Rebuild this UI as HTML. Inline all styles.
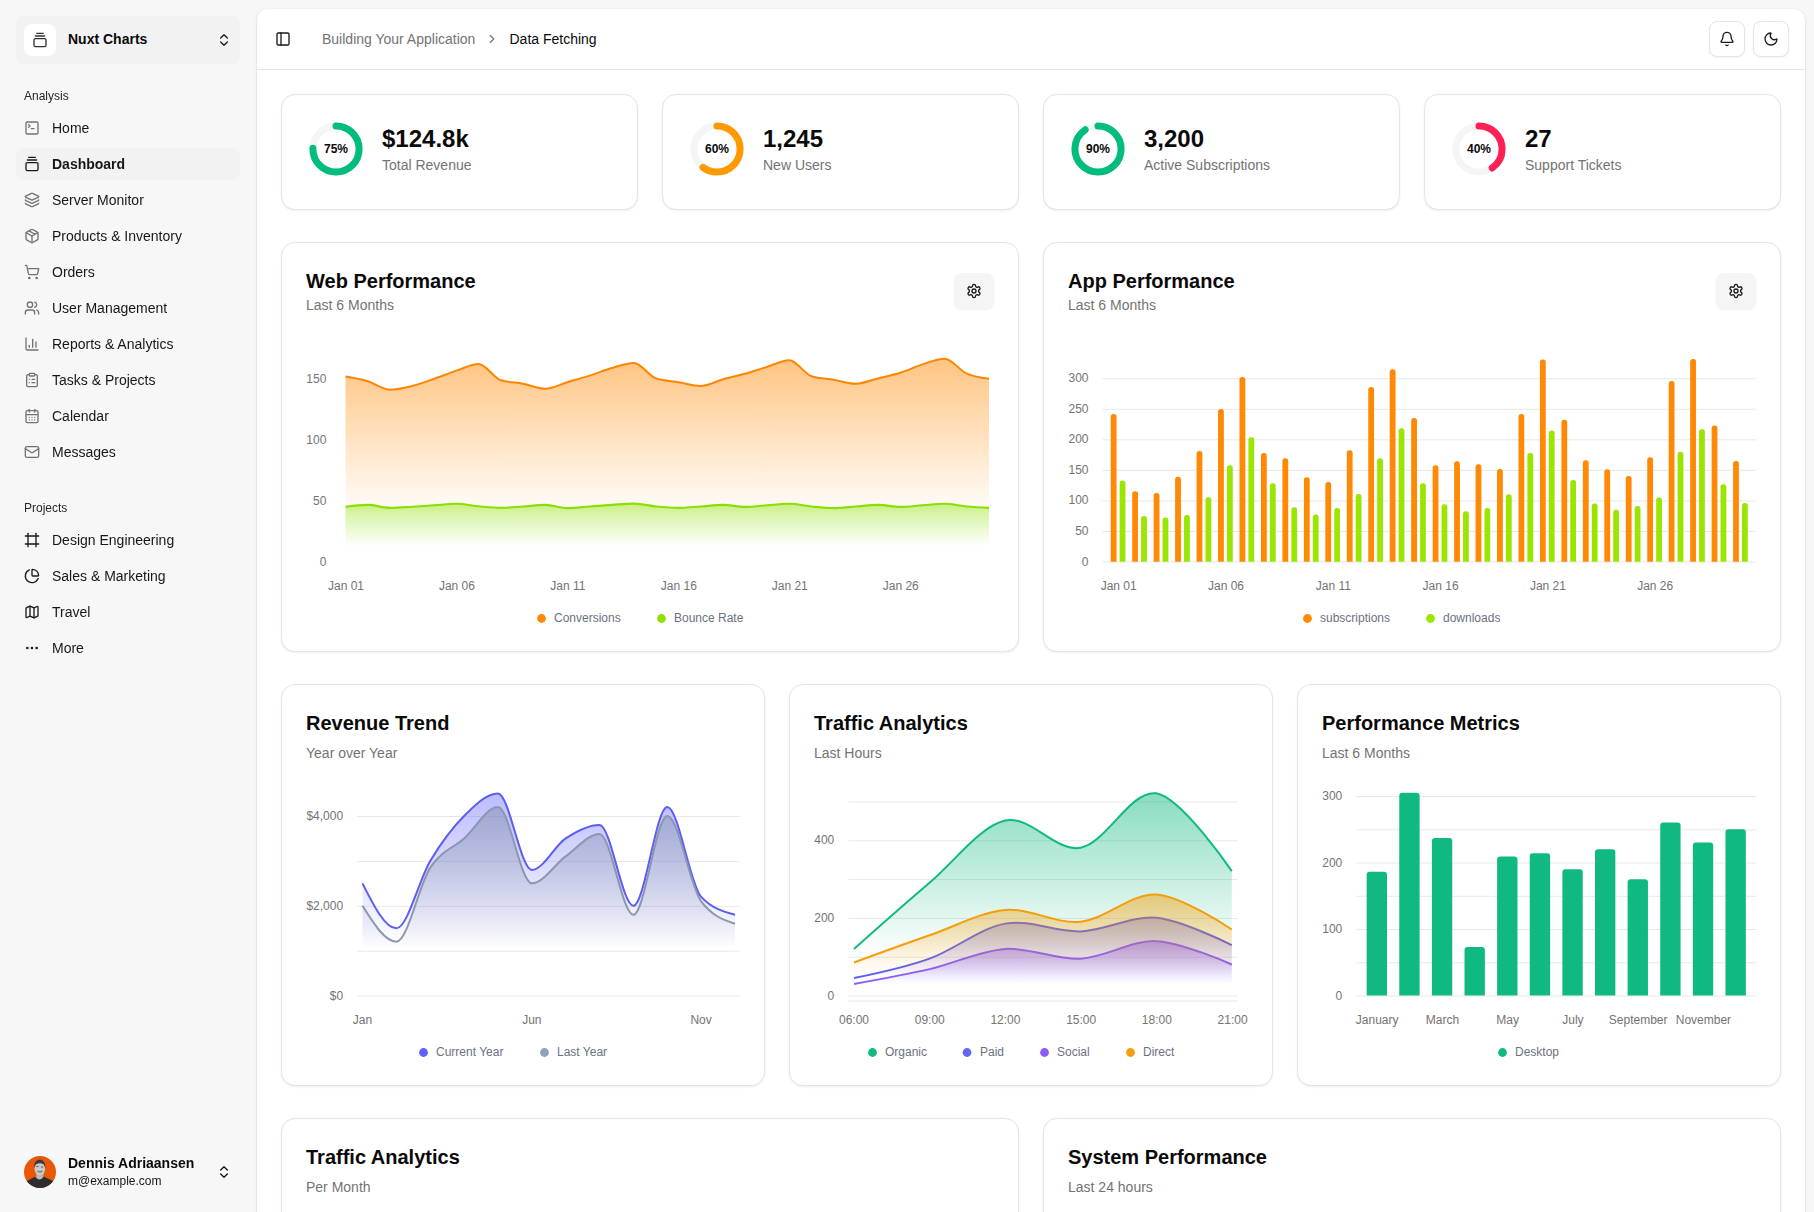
<!DOCTYPE html><html lang="en"><head><meta charset="utf-8"><title>Nuxt Charts Dashboard</title><style>
*{box-sizing:border-box}
html,body{margin:0;padding:0}
body{width:1814px;height:1212px;overflow:hidden;background:#f7f7f7;font-family:"Liberation Sans",Arial,sans-serif;color:#0a0a0a;position:relative}
.ic{position:absolute;display:block}
.t{position:absolute;white-space:nowrap;line-height:20px;font-size:14px}
.b{font-weight:700}
.card{position:absolute;background:#fff;border:1px solid #e5e5e5;border-radius:14px;box-shadow:0 1px 3px rgba(0,0,0,.06),0 1px 2px -1px rgba(0,0,0,.06)}
.box{position:absolute}
svg text{font-family:"Liberation Sans",Arial,sans-serif}
.ax{font-size:12px;fill:#737373}
.lg{font-size:12px;fill:#6a7282}
</style></head><body>
<div class="box" style="left:16px;top:16px;width:224px;height:48px;border-radius:8px;background:#f2f2f2"></div>
<div class="box" style="left:24px;top:24px;width:32px;height:32px;border-radius:8px;background:#fff"></div>
<svg class="ic" style="left:32px;top:32px" width="16" height="16" viewBox="0 0 24 24" fill="none" stroke="#333" stroke-width="2" stroke-linecap="round" stroke-linejoin="round"><path d="M7 2h10"/><path d="M5 6h14"/><rect width="18" height="12" x="3" y="10" rx="2"/></svg>
<div class="t b" style="left:68px;top:29px;font-size:14px;line-height:20px;color:#0a0a0a;">Nuxt Charts</div>
<svg class="ic" style="left:216px;top:31.5px" width="16" height="16" viewBox="0 0 24 24" fill="none" stroke="#1a1a1a" stroke-width="2" stroke-linecap="round" stroke-linejoin="round"><path d="m7 15 5 5 5-5"/><path d="m7 9 5-5 5 5"/></svg>
<div class="box" style="left:257px;top:9px;width:1548px;height:1300px;background:#fff;border-radius:11px;box-shadow:0 0 0 .5px rgba(0,0,0,.04),0 1px 3px rgba(0,0,0,.1),0 1px 2px -1px rgba(0,0,0,.1)"></div>
<div class="box" style="left:257px;top:69px;width:1548px;height:1px;background:#e5e5e5"></div>
<svg class="ic" style="left:275px;top:31px" width="16" height="16" viewBox="0 0 24 24" fill="none" stroke="#1a1a1a" stroke-width="2" stroke-linecap="round" stroke-linejoin="round"><rect width="18" height="18" x="3" y="3" rx="2"/><path d="M9 3v18"/></svg>
<div class="t" style="left:322px;top:29px;font-size:14px;line-height:20px;color:#737373;">Building Your Application</div>
<svg class="ic" style="left:485px;top:32px" width="14" height="14" viewBox="0 0 24 24" fill="none" stroke="#737373" stroke-width="2" stroke-linecap="round" stroke-linejoin="round"><path d="m9 18 6-6-6-6"/></svg>
<div class="t" style="left:509.5px;top:29px;font-size:14px;line-height:20px;color:#0a0a0a;">Data Fetching</div>
<div class="box" style="left:1709px;top:21px;width:36px;height:36px;border:1px solid #e5e5e5;border-radius:8px;background:#fff;box-shadow:0 1px 2px rgba(0,0,0,.05)"></div>
<svg class="ic" style="left:1719px;top:31px" width="16" height="16" viewBox="0 0 24 24" fill="none" stroke="#1a1a1a" stroke-width="2" stroke-linecap="round" stroke-linejoin="round"><path d="M10.268 21a2 2 0 0 0 3.464 0"/><path d="M3.262 15.326A1 1 0 0 0 4 17h16a1 1 0 0 0 .74-1.673C19.41 13.956 18 12.499 18 8A6 6 0 0 0 6 8c0 4.499-1.411 5.956-2.738 7.326"/></svg>
<div class="box" style="left:1753px;top:21px;width:36px;height:36px;border:1px solid #e5e5e5;border-radius:8px;background:#fff;box-shadow:0 1px 2px rgba(0,0,0,.05)"></div>
<svg class="ic" style="left:1763px;top:31px" width="16" height="16" viewBox="0 0 24 24" fill="none" stroke="#1a1a1a" stroke-width="2" stroke-linecap="round" stroke-linejoin="round"><path d="M20.985 12.486a9 9 0 1 1-9.473-9.472c.405-.022.617.46.402.803a6 6 0 0 0 8.268 8.268c.344-.215.825-.004.803.401"/></svg>
<div class="card" style="left:281px;top:94px;width:357px;height:116px"></div>
<svg class="ic" style="left:305.8px;top:118.6px" width="60" height="60" viewBox="0 0 60 60"><circle cx="30" cy="30" r="23.1" fill="none" stroke="#f5f5f5" stroke-width="7"/><circle cx="30" cy="30" r="23.1" fill="none" stroke="#00bc7d" stroke-width="7" stroke-linecap="round" stroke-dasharray="108.86 145.14" transform="rotate(-90 30 30)"/><text x="30" y="34.3" text-anchor="middle" font-size="12" font-weight="700" fill="#0a0a0a">75%</text></svg>
<div class="t b" style="left:382px;top:123px;font-size:24px;line-height:32px;color:#0a0a0a;">$124.8k</div>
<div class="t" style="left:382px;top:155px;font-size:14px;line-height:20px;color:#737373;">Total Revenue</div>
<div class="card" style="left:662px;top:94px;width:357px;height:116px"></div>
<svg class="ic" style="left:686.8px;top:118.6px" width="60" height="60" viewBox="0 0 60 60"><circle cx="30" cy="30" r="23.1" fill="none" stroke="#f5f5f5" stroke-width="7"/><circle cx="30" cy="30" r="23.1" fill="none" stroke="#fe9a00" stroke-width="7" stroke-linecap="round" stroke-dasharray="87.08 145.14" transform="rotate(-90 30 30)"/><text x="30" y="34.3" text-anchor="middle" font-size="12" font-weight="700" fill="#0a0a0a">60%</text></svg>
<div class="t b" style="left:763px;top:123px;font-size:24px;line-height:32px;color:#0a0a0a;">1,245</div>
<div class="t" style="left:763px;top:155px;font-size:14px;line-height:20px;color:#737373;">New Users</div>
<div class="card" style="left:1043px;top:94px;width:357px;height:116px"></div>
<svg class="ic" style="left:1067.8px;top:118.6px" width="60" height="60" viewBox="0 0 60 60"><circle cx="30" cy="30" r="23.1" fill="none" stroke="#f5f5f5" stroke-width="7"/><circle cx="30" cy="30" r="23.1" fill="none" stroke="#00bc7d" stroke-width="7" stroke-linecap="round" stroke-dasharray="130.63 145.14" transform="rotate(-90 30 30)"/><text x="30" y="34.3" text-anchor="middle" font-size="12" font-weight="700" fill="#0a0a0a">90%</text></svg>
<div class="t b" style="left:1144px;top:123px;font-size:24px;line-height:32px;color:#0a0a0a;">3,200</div>
<div class="t" style="left:1144px;top:155px;font-size:14px;line-height:20px;color:#737373;">Active Subscriptions</div>
<div class="card" style="left:1424px;top:94px;width:357px;height:116px"></div>
<svg class="ic" style="left:1448.8px;top:118.6px" width="60" height="60" viewBox="0 0 60 60"><circle cx="30" cy="30" r="23.1" fill="none" stroke="#f5f5f5" stroke-width="7"/><circle cx="30" cy="30" r="23.1" fill="none" stroke="#ff2056" stroke-width="7" stroke-linecap="round" stroke-dasharray="58.06 145.14" transform="rotate(-90 30 30)"/><text x="30" y="34.3" text-anchor="middle" font-size="12" font-weight="700" fill="#0a0a0a">40%</text></svg>
<div class="t b" style="left:1525px;top:123px;font-size:24px;line-height:32px;color:#0a0a0a;">27</div>
<div class="t" style="left:1525px;top:155px;font-size:14px;line-height:20px;color:#737373;">Support Tickets</div>
<div class="card" style="left:281px;top:242px;width:738px;height:410px"></div>
<div class="t b" style="left:306px;top:267px;font-size:20px;line-height:28px;color:#0a0a0a;">Web Performance</div>
<div class="t" style="left:306px;top:295px;font-size:14px;line-height:20px;color:#737373;">Last 6 Months</div>
<div class="box" style="left:954px;top:273px;width:40px;height:36px;border-radius:8px;background:#f5f5f5;box-shadow:0 1px 2px rgba(0,0,0,.06)"></div>
<svg class="ic" style="left:966px;top:283px" width="16" height="16" viewBox="0 0 24 24" fill="none" stroke="#1a1a1a" stroke-width="2" stroke-linecap="round" stroke-linejoin="round"><path d="M12.22 2h-.44a2 2 0 0 0-2 2v.18a2 2 0 0 1-1 1.73l-.43.25a2 2 0 0 1-2 0l-.15-.08a2 2 0 0 0-2.73.73l-.22.38a2 2 0 0 0 .73 2.73l.15.1a2 2 0 0 1 1 1.72v.51a2 2 0 0 1-1 1.74l-.15.09a2 2 0 0 0-.73 2.73l.22.38a2 2 0 0 0 2.73.73l.15-.08a2 2 0 0 1 2 0l.43.25a2 2 0 0 1 1 1.73V20a2 2 0 0 0 2 2h.44a2 2 0 0 0 2-2v-.18a2 2 0 0 1 1-1.73l.43-.25a2 2 0 0 1 2 0l.15.08a2 2 0 0 0 2.73-.73l.22-.39a2 2 0 0 0-.73-2.73l-.15-.08a2 2 0 0 1-1-1.74v-.5a2 2 0 0 1 1-1.74l.15-.09a2 2 0 0 0 .73-2.73l-.22-.38a2 2 0 0 0-2.73-.73l-.15.08a2 2 0 0 1-2 0l-.43-.25a2 2 0 0 1-1-1.73V4a2 2 0 0 0-2-2z"/><circle cx="12" cy="12" r="3"/></svg>
<svg class="ic" style="left:281px;top:242px" width="738" height="410" viewBox="281 242 738 410"><defs><linearGradient id="g_or" x1="0" y1="0" x2="0" y2="1"><stop offset="0" stop-color="#ff8904" stop-opacity="0.5"/><stop offset="0.78" stop-color="#ff8904" stop-opacity="0"/></linearGradient><linearGradient id="g_li" x1="0" y1="0" x2="0" y2="1"><stop offset="0" stop-color="#8de000" stop-opacity="0.45"/><stop offset="0.74" stop-color="#8de000" stop-opacity="0"/></linearGradient></defs><path d="M345.50,376.61C352.90,377.84,360.29,379.08,367.69,381.25C375.09,383.43,382.48,389.69,389.88,389.69C397.28,389.69,404.67,387.83,412.07,386.02C419.47,384.21,426.86,381.38,434.26,378.81C441.66,376.24,449.05,373.09,456.45,370.62C463.84,368.16,471.24,364.02,478.64,364.02C486.03,364.02,493.43,378.00,500.83,380.28C508.22,382.56,515.62,382.29,523.02,383.70C530.41,385.10,537.81,388.71,545.21,388.71C552.60,388.71,560.00,384.41,567.40,382.23C574.79,380.05,582.19,378.00,589.59,375.63C596.98,373.27,604.38,370.18,611.78,368.06C619.17,365.94,626.57,362.93,633.97,362.93C641.36,362.93,648.76,376.12,656.16,378.57C663.55,381.01,670.95,380.99,678.34,382.23C685.74,383.47,693.14,386.02,700.53,386.02C707.93,386.02,715.33,381.46,722.72,379.42C730.12,377.39,737.52,375.90,744.91,373.80C752.31,371.70,759.71,369.10,767.10,366.84C774.50,364.57,781.90,360.24,789.29,360.24C796.69,360.24,804.09,373.88,811.48,376.24C818.88,378.61,826.28,378.55,833.67,379.79C841.07,381.03,848.47,383.70,855.86,383.70C863.26,383.70,870.66,380.26,878.05,378.44C885.45,376.63,892.84,375.17,900.24,372.82C907.64,370.48,915.03,366.75,922.43,364.39C929.83,362.03,937.22,358.65,944.62,358.65C952.02,358.65,959.41,370.32,966.81,373.68C974.21,377.04,981.60,377.93,989.00,378.81L989.00,561.50 L345.50,561.50 Z" fill="url(#g_or)"/><path d="M345.50,376.61C352.90,377.84,360.29,379.08,367.69,381.25C375.09,383.43,382.48,389.69,389.88,389.69C397.28,389.69,404.67,387.83,412.07,386.02C419.47,384.21,426.86,381.38,434.26,378.81C441.66,376.24,449.05,373.09,456.45,370.62C463.84,368.16,471.24,364.02,478.64,364.02C486.03,364.02,493.43,378.00,500.83,380.28C508.22,382.56,515.62,382.29,523.02,383.70C530.41,385.10,537.81,388.71,545.21,388.71C552.60,388.71,560.00,384.41,567.40,382.23C574.79,380.05,582.19,378.00,589.59,375.63C596.98,373.27,604.38,370.18,611.78,368.06C619.17,365.94,626.57,362.93,633.97,362.93C641.36,362.93,648.76,376.12,656.16,378.57C663.55,381.01,670.95,380.99,678.34,382.23C685.74,383.47,693.14,386.02,700.53,386.02C707.93,386.02,715.33,381.46,722.72,379.42C730.12,377.39,737.52,375.90,744.91,373.80C752.31,371.70,759.71,369.10,767.10,366.84C774.50,364.57,781.90,360.24,789.29,360.24C796.69,360.24,804.09,373.88,811.48,376.24C818.88,378.61,826.28,378.55,833.67,379.79C841.07,381.03,848.47,383.70,855.86,383.70C863.26,383.70,870.66,380.26,878.05,378.44C885.45,376.63,892.84,375.17,900.24,372.82C907.64,370.48,915.03,366.75,922.43,364.39C929.83,362.03,937.22,358.65,944.62,358.65C952.02,358.65,959.41,370.32,966.81,373.68C974.21,377.04,981.60,377.93,989.00,378.81" fill="none" stroke="#ff8500" stroke-width="2" stroke-linejoin="round"/><path d="M345.50,506.75C352.90,505.84,360.29,504.92,367.69,504.92C375.09,504.92,382.48,507.85,389.88,507.85C397.28,507.85,404.67,507.18,412.07,506.75C419.47,506.33,426.86,505.78,434.26,505.29C441.66,504.80,449.05,503.82,456.45,503.82C463.84,503.82,471.24,505.59,478.64,506.27C486.03,506.94,493.43,507.85,500.83,507.85C508.22,507.85,515.62,507.00,523.02,506.51C530.41,506.02,537.81,504.92,545.21,504.92C552.60,504.92,560.00,508.10,567.40,508.10C574.79,508.10,582.19,507.04,589.59,506.51C596.98,505.98,604.38,505.41,611.78,504.92C619.17,504.43,626.57,503.58,633.97,503.58C641.36,503.58,648.76,505.80,656.16,506.51C663.55,507.22,670.95,507.85,678.34,507.85C685.74,507.85,693.14,507.00,700.53,506.51C707.93,506.02,715.33,504.92,722.72,504.92C730.12,504.92,737.52,506.88,744.91,506.88C752.31,506.88,759.71,505.80,767.10,505.29C774.50,504.78,781.90,503.82,789.29,503.82C796.69,503.82,804.09,505.80,811.48,506.51C818.88,507.22,826.28,508.10,833.67,508.10C841.07,508.10,848.47,507.04,855.86,506.51C863.26,505.98,870.66,504.92,878.05,504.92C885.45,504.92,892.84,506.88,900.24,506.88C907.64,506.88,915.03,505.80,922.43,505.29C929.83,504.78,937.22,503.82,944.62,503.82C952.02,503.82,959.41,505.84,966.81,506.51C974.21,507.18,981.60,507.52,989.00,507.85L989.00,561.50 L345.50,561.50 Z" fill="url(#g_li)"/><path d="M345.50,506.75C352.90,505.84,360.29,504.92,367.69,504.92C375.09,504.92,382.48,507.85,389.88,507.85C397.28,507.85,404.67,507.18,412.07,506.75C419.47,506.33,426.86,505.78,434.26,505.29C441.66,504.80,449.05,503.82,456.45,503.82C463.84,503.82,471.24,505.59,478.64,506.27C486.03,506.94,493.43,507.85,500.83,507.85C508.22,507.85,515.62,507.00,523.02,506.51C530.41,506.02,537.81,504.92,545.21,504.92C552.60,504.92,560.00,508.10,567.40,508.10C574.79,508.10,582.19,507.04,589.59,506.51C596.98,505.98,604.38,505.41,611.78,504.92C619.17,504.43,626.57,503.58,633.97,503.58C641.36,503.58,648.76,505.80,656.16,506.51C663.55,507.22,670.95,507.85,678.34,507.85C685.74,507.85,693.14,507.00,700.53,506.51C707.93,506.02,715.33,504.92,722.72,504.92C730.12,504.92,737.52,506.88,744.91,506.88C752.31,506.88,759.71,505.80,767.10,505.29C774.50,504.78,781.90,503.82,789.29,503.82C796.69,503.82,804.09,505.80,811.48,506.51C818.88,507.22,826.28,508.10,833.67,508.10C841.07,508.10,848.47,507.04,855.86,506.51C863.26,505.98,870.66,504.92,878.05,504.92C885.45,504.92,892.84,506.88,900.24,506.88C907.64,506.88,915.03,505.80,922.43,505.29C929.83,504.78,937.22,503.82,944.62,503.82C952.02,503.82,959.41,505.84,966.81,506.51C974.21,507.18,981.60,507.52,989.00,507.85" fill="none" stroke="#88e000" stroke-width="2.1" stroke-linejoin="round"/><text class="ax" x="326.4" y="565.55" text-anchor="end">0</text><text class="ax" x="326.4" y="504.55" text-anchor="end">50</text><text class="ax" x="326.4" y="443.55" text-anchor="end">100</text><text class="ax" x="326.4" y="382.55" text-anchor="end">150</text><text class="ax" x="346" y="590.2" text-anchor="middle">Jan 01</text><text class="ax" x="456.948" y="590.2" text-anchor="middle">Jan 06</text><text class="ax" x="567.897" y="590.2" text-anchor="middle">Jan 11</text><text class="ax" x="678.845" y="590.2" text-anchor="middle">Jan 16</text><text class="ax" x="789.793" y="590.2" text-anchor="middle">Jan 21</text><text class="ax" x="900.741" y="590.2" text-anchor="middle">Jan 26</text><circle cx="541.5" cy="618.5" r="4.4" fill="#ff8904"/><text class="lg" x="554" y="622.2">Conversions</text><circle cx="661.5" cy="618.5" r="4.4" fill="#8de000"/><text class="lg" x="674" y="622.2">Bounce Rate</text></svg>
<div class="card" style="left:1043px;top:242px;width:738px;height:410px"></div>
<div class="t b" style="left:1068px;top:267px;font-size:20px;line-height:28px;color:#0a0a0a;">App Performance</div>
<div class="t" style="left:1068px;top:295px;font-size:14px;line-height:20px;color:#737373;">Last 6 Months</div>
<div class="box" style="left:1716px;top:273px;width:40px;height:36px;border-radius:8px;background:#f5f5f5;box-shadow:0 1px 2px rgba(0,0,0,.06)"></div>
<svg class="ic" style="left:1728px;top:283px" width="16" height="16" viewBox="0 0 24 24" fill="none" stroke="#1a1a1a" stroke-width="2" stroke-linecap="round" stroke-linejoin="round"><path d="M12.22 2h-.44a2 2 0 0 0-2 2v.18a2 2 0 0 1-1 1.73l-.43.25a2 2 0 0 1-2 0l-.15-.08a2 2 0 0 0-2.73.73l-.22.38a2 2 0 0 0 .73 2.73l.15.1a2 2 0 0 1 1 1.72v.51a2 2 0 0 1-1 1.74l-.15.09a2 2 0 0 0-.73 2.73l.22.38a2 2 0 0 0 2.73.73l.15-.08a2 2 0 0 1 2 0l.43.25a2 2 0 0 1 1 1.73V20a2 2 0 0 0 2 2h.44a2 2 0 0 0 2-2v-.18a2 2 0 0 1 1-1.73l.43-.25a2 2 0 0 1 2 0l.15.08a2 2 0 0 0 2.73-.73l.22-.39a2 2 0 0 0-.73-2.73l-.15-.08a2 2 0 0 1-1-1.74v-.5a2 2 0 0 1 1-1.74l.15-.09a2 2 0 0 0 .73-2.73l-.22-.38a2 2 0 0 0-2.73-.73l-.15.08a2 2 0 0 1-2 0l-.43-.25a2 2 0 0 1-1-1.73V4a2 2 0 0 0-2-2z"/><circle cx="12" cy="12" r="3"/></svg>
<svg class="ic" style="left:1043px;top:242px" width="738" height="410" viewBox="1043 242 738 410"><line x1="1102.5" x2="1756" y1="562.00" y2="562.00" stroke="#e8e8e8" stroke-width="1"/><text class="ax" x="1088.5" y="565.55" text-anchor="end">0</text><line x1="1102.5" x2="1756" y1="531.46" y2="531.46" stroke="#e8e8e8" stroke-width="1"/><text class="ax" x="1088.5" y="535.007" text-anchor="end">50</text><line x1="1102.5" x2="1756" y1="500.91" y2="500.91" stroke="#e8e8e8" stroke-width="1"/><text class="ax" x="1088.5" y="504.463" text-anchor="end">100</text><line x1="1102.5" x2="1756" y1="470.37" y2="470.37" stroke="#e8e8e8" stroke-width="1"/><text class="ax" x="1088.5" y="473.92" text-anchor="end">150</text><line x1="1102.5" x2="1756" y1="439.83" y2="439.83" stroke="#e8e8e8" stroke-width="1"/><text class="ax" x="1088.5" y="443.377" text-anchor="end">200</text><line x1="1102.5" x2="1756" y1="409.28" y2="409.28" stroke="#e8e8e8" stroke-width="1"/><text class="ax" x="1088.5" y="412.833" text-anchor="end">250</text><line x1="1102.5" x2="1756" y1="378.74" y2="378.74" stroke="#e8e8e8" stroke-width="1"/><text class="ax" x="1088.5" y="382.29" text-anchor="end">300</text><path d="M1110.75,561.70V416.49a2.6,2.6 0 0 1 2.6,-2.6h0.60a2.6,2.6 0 0 1 2.6,2.6V561.70Z" fill="#ff8904"/><path d="M1119.65,561.70V483.04a2.6,2.6 0 0 1 2.6,-2.6h0.60a2.6,2.6 0 0 1 2.6,2.6V561.70Z" fill="#9ae600"/><path d="M1132.21,561.70V493.96a2.6,2.6 0 0 1 2.6,-2.6h0.60a2.6,2.6 0 0 1 2.6,2.6V561.70Z" fill="#ff8904"/><path d="M1141.11,561.70V518.54a2.6,2.6 0 0 1 2.6,-2.6h0.60a2.6,2.6 0 0 1 2.6,2.6V561.70Z" fill="#9ae600"/><path d="M1153.67,561.70V495.72a2.6,2.6 0 0 1 2.6,-2.6h0.60a2.6,2.6 0 0 1 2.6,2.6V561.70Z" fill="#ff8904"/><path d="M1162.57,561.70V520.12a2.6,2.6 0 0 1 2.6,-2.6h0.60a2.6,2.6 0 0 1 2.6,2.6V561.70Z" fill="#9ae600"/><path d="M1175.13,561.70V479.25a2.6,2.6 0 0 1 2.6,-2.6h0.60a2.6,2.6 0 0 1 2.6,2.6V561.70Z" fill="#ff8904"/><path d="M1184.03,561.70V517.56a2.6,2.6 0 0 1 2.6,-2.6h0.60a2.6,2.6 0 0 1 2.6,2.6V561.70Z" fill="#9ae600"/><path d="M1196.59,561.70V453.63a2.6,2.6 0 0 1 2.6,-2.6h0.60a2.6,2.6 0 0 1 2.6,2.6V561.70Z" fill="#ff8904"/><path d="M1205.49,561.70V499.87a2.6,2.6 0 0 1 2.6,-2.6h0.60a2.6,2.6 0 0 1 2.6,2.6V561.70Z" fill="#9ae600"/><path d="M1218.05,561.70V411.54a2.6,2.6 0 0 1 2.6,-2.6h0.60a2.6,2.6 0 0 1 2.6,2.6V561.70Z" fill="#ff8904"/><path d="M1226.95,561.70V467.73a2.6,2.6 0 0 1 2.6,-2.6h0.60a2.6,2.6 0 0 1 2.6,2.6V561.70Z" fill="#9ae600"/><path d="M1239.51,561.70V379.58a2.6,2.6 0 0 1 2.6,-2.6h0.60a2.6,2.6 0 0 1 2.6,2.6V561.70Z" fill="#ff8904"/><path d="M1248.41,561.70V439.73a2.6,2.6 0 0 1 2.6,-2.6h0.60a2.6,2.6 0 0 1 2.6,2.6V561.70Z" fill="#9ae600"/><path d="M1260.97,561.70V455.59a2.6,2.6 0 0 1 2.6,-2.6h0.60a2.6,2.6 0 0 1 2.6,2.6V561.70Z" fill="#ff8904"/><path d="M1269.87,561.70V485.78a2.6,2.6 0 0 1 2.6,-2.6h0.60a2.6,2.6 0 0 1 2.6,2.6V561.70Z" fill="#9ae600"/><path d="M1282.43,561.70V460.95a2.6,2.6 0 0 1 2.6,-2.6h0.60a2.6,2.6 0 0 1 2.6,2.6V561.70Z" fill="#ff8904"/><path d="M1291.33,561.70V509.82a2.6,2.6 0 0 1 2.6,-2.6h0.60a2.6,2.6 0 0 1 2.6,2.6V561.70Z" fill="#9ae600"/><path d="M1303.89,561.70V479.86a2.6,2.6 0 0 1 2.6,-2.6h0.60a2.6,2.6 0 0 1 2.6,2.6V561.70Z" fill="#ff8904"/><path d="M1312.79,561.70V517.14a2.6,2.6 0 0 1 2.6,-2.6h0.60a2.6,2.6 0 0 1 2.6,2.6V561.70Z" fill="#9ae600"/><path d="M1325.35,561.70V484.62a2.6,2.6 0 0 1 2.6,-2.6h0.60a2.6,2.6 0 0 1 2.6,2.6V561.70Z" fill="#ff8904"/><path d="M1334.25,561.70V510.61a2.6,2.6 0 0 1 2.6,-2.6h0.60a2.6,2.6 0 0 1 2.6,2.6V561.70Z" fill="#9ae600"/><path d="M1346.81,561.70V452.84a2.6,2.6 0 0 1 2.6,-2.6h0.60a2.6,2.6 0 0 1 2.6,2.6V561.70Z" fill="#ff8904"/><path d="M1355.71,561.70V496.52a2.6,2.6 0 0 1 2.6,-2.6h0.60a2.6,2.6 0 0 1 2.6,2.6V561.70Z" fill="#9ae600"/><path d="M1368.27,561.70V389.52a2.6,2.6 0 0 1 2.6,-2.6h0.60a2.6,2.6 0 0 1 2.6,2.6V561.70Z" fill="#ff8904"/><path d="M1377.17,561.70V460.95a2.6,2.6 0 0 1 2.6,-2.6h0.60a2.6,2.6 0 0 1 2.6,2.6V561.70Z" fill="#9ae600"/><path d="M1389.73,561.70V371.83a2.6,2.6 0 0 1 2.6,-2.6h0.60a2.6,2.6 0 0 1 2.6,2.6V561.70Z" fill="#ff8904"/><path d="M1398.63,561.70V430.82a2.6,2.6 0 0 1 2.6,-2.6h0.60a2.6,2.6 0 0 1 2.6,2.6V561.70Z" fill="#9ae600"/><path d="M1411.19,561.70V420.69a2.6,2.6 0 0 1 2.6,-2.6h0.60a2.6,2.6 0 0 1 2.6,2.6V561.70Z" fill="#ff8904"/><path d="M1420.09,561.70V485.78a2.6,2.6 0 0 1 2.6,-2.6h0.60a2.6,2.6 0 0 1 2.6,2.6V561.70Z" fill="#9ae600"/><path d="M1432.65,561.70V467.73a2.6,2.6 0 0 1 2.6,-2.6h0.60a2.6,2.6 0 0 1 2.6,2.6V561.70Z" fill="#ff8904"/><path d="M1441.55,561.70V506.83a2.6,2.6 0 0 1 2.6,-2.6h0.60a2.6,2.6 0 0 1 2.6,2.6V561.70Z" fill="#9ae600"/><path d="M1454.11,561.70V463.94a2.6,2.6 0 0 1 2.6,-2.6h0.60a2.6,2.6 0 0 1 2.6,2.6V561.70Z" fill="#ff8904"/><path d="M1463.01,561.70V513.96a2.6,2.6 0 0 1 2.6,-2.6h0.60a2.6,2.6 0 0 1 2.6,2.6V561.70Z" fill="#9ae600"/><path d="M1475.57,561.70V466.93a2.6,2.6 0 0 1 2.6,-2.6h0.60a2.6,2.6 0 0 1 2.6,2.6V561.70Z" fill="#ff8904"/><path d="M1484.47,561.70V510.61a2.6,2.6 0 0 1 2.6,-2.6h0.60a2.6,2.6 0 0 1 2.6,2.6V561.70Z" fill="#9ae600"/><path d="M1497.03,561.70V471.69a2.6,2.6 0 0 1 2.6,-2.6h0.60a2.6,2.6 0 0 1 2.6,2.6V561.70Z" fill="#ff8904"/><path d="M1505.93,561.70V496.88a2.6,2.6 0 0 1 2.6,-2.6h0.60a2.6,2.6 0 0 1 2.6,2.6V561.70Z" fill="#9ae600"/><path d="M1518.49,561.70V416.49a2.6,2.6 0 0 1 2.6,-2.6h0.60a2.6,2.6 0 0 1 2.6,2.6V561.70Z" fill="#ff8904"/><path d="M1527.39,561.70V455.59a2.6,2.6 0 0 1 2.6,-2.6h0.60a2.6,2.6 0 0 1 2.6,2.6V561.70Z" fill="#9ae600"/><path d="M1539.95,561.70V362.13a2.6,2.6 0 0 1 2.6,-2.6h0.60a2.6,2.6 0 0 1 2.6,2.6V561.70Z" fill="#ff8904"/><path d="M1548.85,561.70V433.02a2.6,2.6 0 0 1 2.6,-2.6h0.60a2.6,2.6 0 0 1 2.6,2.6V561.70Z" fill="#9ae600"/><path d="M1561.41,561.70V422.46a2.6,2.6 0 0 1 2.6,-2.6h0.60a2.6,2.6 0 0 1 2.6,2.6V561.70Z" fill="#ff8904"/><path d="M1570.31,561.70V482.61a2.6,2.6 0 0 1 2.6,-2.6h0.60a2.6,2.6 0 0 1 2.6,2.6V561.70Z" fill="#9ae600"/><path d="M1582.87,561.70V462.78a2.6,2.6 0 0 1 2.6,-2.6h0.60a2.6,2.6 0 0 1 2.6,2.6V561.70Z" fill="#ff8904"/><path d="M1591.77,561.70V506.22a2.6,2.6 0 0 1 2.6,-2.6h0.60a2.6,2.6 0 0 1 2.6,2.6V561.70Z" fill="#9ae600"/><path d="M1604.33,561.70V471.87a2.6,2.6 0 0 1 2.6,-2.6h0.60a2.6,2.6 0 0 1 2.6,2.6V561.70Z" fill="#ff8904"/><path d="M1613.23,561.70V512.38a2.6,2.6 0 0 1 2.6,-2.6h0.60a2.6,2.6 0 0 1 2.6,2.6V561.70Z" fill="#9ae600"/><path d="M1625.79,561.70V478.64a2.6,2.6 0 0 1 2.6,-2.6h0.60a2.6,2.6 0 0 1 2.6,2.6V561.70Z" fill="#ff8904"/><path d="M1634.69,561.70V508.60a2.6,2.6 0 0 1 2.6,-2.6h0.60a2.6,2.6 0 0 1 2.6,2.6V561.70Z" fill="#9ae600"/><path d="M1647.25,561.70V459.80a2.6,2.6 0 0 1 2.6,-2.6h0.60a2.6,2.6 0 0 1 2.6,2.6V561.70Z" fill="#ff8904"/><path d="M1656.15,561.70V500.06a2.6,2.6 0 0 1 2.6,-2.6h0.60a2.6,2.6 0 0 1 2.6,2.6V561.70Z" fill="#9ae600"/><path d="M1668.71,561.70V383.55a2.6,2.6 0 0 1 2.6,-2.6h0.60a2.6,2.6 0 0 1 2.6,2.6V561.70Z" fill="#ff8904"/><path d="M1677.61,561.70V454.43a2.6,2.6 0 0 1 2.6,-2.6h0.60a2.6,2.6 0 0 1 2.6,2.6V561.70Z" fill="#9ae600"/><path d="M1690.17,561.70V361.52a2.6,2.6 0 0 1 2.6,-2.6h0.60a2.6,2.6 0 0 1 2.6,2.6V561.70Z" fill="#ff8904"/><path d="M1699.07,561.70V431.80a2.6,2.6 0 0 1 2.6,-2.6h0.60a2.6,2.6 0 0 1 2.6,2.6V561.70Z" fill="#9ae600"/><path d="M1711.63,561.70V428.01a2.6,2.6 0 0 1 2.6,-2.6h0.60a2.6,2.6 0 0 1 2.6,2.6V561.70Z" fill="#ff8904"/><path d="M1720.53,561.70V486.76a2.6,2.6 0 0 1 2.6,-2.6h0.60a2.6,2.6 0 0 1 2.6,2.6V561.70Z" fill="#9ae600"/><path d="M1733.09,561.70V463.58a2.6,2.6 0 0 1 2.6,-2.6h0.60a2.6,2.6 0 0 1 2.6,2.6V561.70Z" fill="#ff8904"/><path d="M1741.99,561.70V505.67a2.6,2.6 0 0 1 2.6,-2.6h0.60a2.6,2.6 0 0 1 2.6,2.6V561.70Z" fill="#9ae600"/><text class="ax" x="1118.7" y="590.2" text-anchor="middle">Jan 01</text><text class="ax" x="1226" y="590.2" text-anchor="middle">Jan 06</text><text class="ax" x="1333.3" y="590.2" text-anchor="middle">Jan 11</text><text class="ax" x="1440.6" y="590.2" text-anchor="middle">Jan 16</text><text class="ax" x="1547.9" y="590.2" text-anchor="middle">Jan 21</text><text class="ax" x="1655.2" y="590.2" text-anchor="middle">Jan 26</text><circle cx="1307.5" cy="618.5" r="4.4" fill="#ff8904"/><text class="lg" x="1320" y="622.2">subscriptions</text><circle cx="1430.5" cy="618.5" r="4.4" fill="#9ae600"/><text class="lg" x="1443" y="622.2">downloads</text></svg>
<div class="card" style="left:281px;top:684px;width:484px;height:402px"></div>
<div class="t b" style="left:306px;top:709px;font-size:20px;line-height:28px;color:#0a0a0a;">Revenue Trend</div>
<div class="t" style="left:306px;top:743px;font-size:14px;line-height:20px;color:#737373;">Year over Year</div>
<svg class="ic" style="left:281px;top:684px" width="484" height="402" viewBox="281 684 484 402"><defs><linearGradient id="g_in" x1="0" y1="0" x2="0" y2="1"><stop offset="0" stop-color="#615fff" stop-opacity="0.42"/><stop offset="0.76" stop-color="#615fff" stop-opacity="0"/></linearGradient><linearGradient id="g_sl" x1="0" y1="0" x2="0" y2="1"><stop offset="0" stop-color="#7b8ba5" stop-opacity="0.5"/><stop offset="0.76" stop-color="#7b8ba5" stop-opacity="0"/></linearGradient></defs><line x1="357" x2="740" y1="996.10" y2="996.10" stroke="#e8e8e8" stroke-width="1"/><text class="ax" x="343.1" y="999.65" text-anchor="end">$0</text><line x1="357" x2="740" y1="951.20" y2="951.20" stroke="#e8e8e8" stroke-width="1"/><line x1="357" x2="740" y1="906.30" y2="906.30" stroke="#e8e8e8" stroke-width="1"/><text class="ax" x="343.1" y="909.85" text-anchor="end">$2,000</text><line x1="357" x2="740" y1="861.40" y2="861.40" stroke="#e8e8e8" stroke-width="1"/><line x1="357" x2="740" y1="816.50" y2="816.50" stroke="#e8e8e8" stroke-width="1"/><text class="ax" x="343.1" y="820.05" text-anchor="end">$4,000</text><path d="M362.50,883.35C373.79,905.80,385.08,928.25,396.36,928.25C407.65,928.25,418.94,879.61,430.23,860.90C441.52,842.19,452.80,827.23,464.09,816.00C475.38,804.77,486.67,793.55,497.95,793.55C509.24,793.55,520.53,869.88,531.82,869.88C543.11,869.88,554.39,845.93,565.68,838.45C576.97,830.97,588.26,824.98,599.55,824.98C610.83,824.98,622.12,905.80,633.41,905.80C644.70,905.80,655.98,807.02,667.27,807.02C678.56,807.02,689.85,884.85,701.14,896.82C712.42,908.79,723.71,911.79,735.00,914.78L735.00,995.60 L362.50,995.60 Z" fill="url(#g_in)"/><path d="M362.50,883.35C373.79,905.80,385.08,928.25,396.36,928.25C407.65,928.25,418.94,879.61,430.23,860.90C441.52,842.19,452.80,827.23,464.09,816.00C475.38,804.77,486.67,793.55,497.95,793.55C509.24,793.55,520.53,869.88,531.82,869.88C543.11,869.88,554.39,845.93,565.68,838.45C576.97,830.97,588.26,824.98,599.55,824.98C610.83,824.98,622.12,905.80,633.41,905.80C644.70,905.80,655.98,807.02,667.27,807.02C678.56,807.02,689.85,884.85,701.14,896.82C712.42,908.79,723.71,911.79,735.00,914.78" fill="none" stroke="#5b5ef0" stroke-width="2"/><path d="M362.50,905.80C373.79,923.76,385.08,941.72,396.36,941.72C407.65,941.72,418.94,884.85,430.23,867.63C441.52,850.42,452.80,848.55,464.09,838.45C475.38,828.35,486.67,807.02,497.95,807.02C509.24,807.02,520.53,883.35,531.82,883.35C543.11,883.35,554.39,864.64,565.68,856.41C576.97,848.18,588.26,833.96,599.55,833.96C610.83,833.96,622.12,914.78,633.41,914.78C644.70,914.78,655.98,816.00,667.27,816.00C678.56,816.00,689.85,886.34,701.14,901.31C712.42,916.28,723.71,920.02,735.00,923.76L735.00,995.60 L362.50,995.60 Z" fill="url(#g_sl)"/><path d="M362.50,905.80C373.79,923.76,385.08,941.72,396.36,941.72C407.65,941.72,418.94,884.85,430.23,867.63C441.52,850.42,452.80,848.55,464.09,838.45C475.38,828.35,486.67,807.02,497.95,807.02C509.24,807.02,520.53,883.35,531.82,883.35C543.11,883.35,554.39,864.64,565.68,856.41C576.97,848.18,588.26,833.96,599.55,833.96C610.83,833.96,622.12,914.78,633.41,914.78C644.70,914.78,655.98,816.00,667.27,816.00C678.56,816.00,689.85,886.34,701.14,901.31C712.42,916.28,723.71,920.02,735.00,923.76" fill="none" stroke="#8a97ad" stroke-width="2"/><text class="ax" x="362.5" y="1024.2" text-anchor="middle">Jan</text><text class="ax" x="531.818" y="1024.2" text-anchor="middle">Jun</text><text class="ax" x="701.136" y="1024.2" text-anchor="middle">Nov</text><circle cx="423.5" cy="1052.5" r="4.4" fill="#615fff"/><text class="lg" x="436" y="1056.2">Current Year</text><circle cx="544.5" cy="1052.5" r="4.4" fill="#90a1b9"/><text class="lg" x="557" y="1056.2">Last Year</text></svg>
<div class="card" style="left:789px;top:684px;width:484px;height:402px"></div>
<div class="t b" style="left:814px;top:709px;font-size:20px;line-height:28px;color:#0a0a0a;">Traffic Analytics</div>
<div class="t" style="left:814px;top:743px;font-size:14px;line-height:20px;color:#737373;">Last Hours</div>
<svg class="ic" style="left:789px;top:684px" width="484" height="402" viewBox="789 684 484 402"><defs><linearGradient id="g_t1" x1="0" y1="0" x2="0" y2="1"><stop offset="0" stop-color="#10b981" stop-opacity="0.5"/><stop offset="0.8" stop-color="#10b981" stop-opacity="0"/></linearGradient><linearGradient id="g_t2" x1="0" y1="0" x2="0" y2="1"><stop offset="0" stop-color="#6366f1" stop-opacity="0.45"/><stop offset="0.8" stop-color="#6366f1" stop-opacity="0"/></linearGradient><linearGradient id="g_t3" x1="0" y1="0" x2="0" y2="1"><stop offset="0" stop-color="#8b5cf6" stop-opacity="0.5"/><stop offset="0.8" stop-color="#8b5cf6" stop-opacity="0"/></linearGradient><linearGradient id="g_t4" x1="0" y1="0" x2="0" y2="1"><stop offset="0" stop-color="#f59e0b" stop-opacity="0.5"/><stop offset="0.8" stop-color="#f59e0b" stop-opacity="0"/></linearGradient></defs><line x1="848.5" x2="1237.5" y1="996.05" y2="996.05" stroke="#e8e8e8" stroke-width="1"/><text class="ax" x="834.3" y="999.6" text-anchor="end">0</text><line x1="848.5" x2="1237.5" y1="957.23" y2="957.23" stroke="#e8e8e8" stroke-width="1"/><line x1="848.5" x2="1237.5" y1="918.41" y2="918.41" stroke="#e8e8e8" stroke-width="1"/><text class="ax" x="834.3" y="921.96" text-anchor="end">200</text><line x1="848.5" x2="1237.5" y1="879.59" y2="879.59" stroke="#e8e8e8" stroke-width="1"/><line x1="848.5" x2="1237.5" y1="840.77" y2="840.77" stroke="#e8e8e8" stroke-width="1"/><text class="ax" x="834.3" y="844.32" text-anchor="end">400</text><line x1="848.5" x2="1237.5" y1="801.95" y2="801.95" stroke="#e8e8e8" stroke-width="1"/><line x1="848.5" x2="1237.5" y1="1001" y2="1001" stroke="#e6e6ee" stroke-width="1"/><path d="M854.00,948.92C854.00,948.92,904.37,904.18,929.56,882.79C954.75,861.39,979.93,826.38,1005.12,820.55C1030.31,814.71,1055.49,852.32,1080.68,847.78C1105.87,843.24,1131.05,789.43,1156.24,793.32C1181.43,797.21,1231.80,871.12,1231.80,871.12L1231.80,995.60 L854.00,995.60 Z" fill="url(#g_t1)"/><path d="M854.00,948.92C854.00,948.92,904.37,904.18,929.56,882.79C954.75,861.39,979.93,826.38,1005.12,820.55C1030.31,814.71,1055.49,852.32,1080.68,847.78C1105.87,843.24,1131.05,789.43,1156.24,793.32C1181.43,797.21,1231.80,871.12,1231.80,871.12" fill="none" stroke="#10b981" stroke-width="2"/><path d="M854.00,978.10C854.00,978.10,904.37,967.72,929.56,958.64C954.75,949.57,979.93,928.17,1005.12,923.63C1030.31,919.10,1055.49,932.39,1080.68,931.41C1105.87,930.44,1131.05,915.53,1156.24,917.80C1181.43,920.07,1231.80,945.03,1231.80,945.03L1231.80,995.60 L854.00,995.60 Z" fill="url(#g_t2)"/><path d="M854.00,978.10C854.00,978.10,904.37,967.72,929.56,958.64C954.75,949.57,979.93,928.17,1005.12,923.63C1030.31,919.10,1055.49,932.39,1080.68,931.41C1105.87,930.44,1131.05,915.53,1156.24,917.80C1181.43,920.07,1231.80,945.03,1231.80,945.03" fill="none" stroke="#5b5ef0" stroke-width="2"/><path d="M854.00,983.93C854.00,983.93,904.37,974.98,929.56,969.15C954.75,963.31,979.93,950.67,1005.12,948.92C1030.31,947.17,1055.49,959.94,1080.68,958.64C1105.87,957.35,1131.05,940.17,1156.24,941.14C1181.43,942.11,1231.80,964.48,1231.80,964.48L1231.80,995.60 L854.00,995.60 Z" fill="url(#g_t3)"/><path d="M854.00,983.93C854.00,983.93,904.37,974.98,929.56,969.15C954.75,963.31,979.93,950.67,1005.12,948.92C1030.31,947.17,1055.49,959.94,1080.68,958.64C1105.87,957.35,1131.05,940.17,1156.24,941.14C1181.43,942.11,1231.80,964.48,1231.80,964.48" fill="none" stroke="#8b5cf6" stroke-width="2"/><path d="M854.00,962.53C854.00,962.53,904.37,944.06,929.56,935.31C954.75,926.55,979.93,912.29,1005.12,910.02C1030.31,907.75,1055.49,924.28,1080.68,921.69C1105.87,919.10,1131.05,893.16,1156.24,894.46C1181.43,895.76,1231.80,929.47,1231.80,929.47L1231.80,995.60 L854.00,995.60 Z" fill="url(#g_t4)"/><path d="M854.00,962.53C854.00,962.53,904.37,944.06,929.56,935.31C954.75,926.55,979.93,912.29,1005.12,910.02C1030.31,907.75,1055.49,924.28,1080.68,921.69C1105.87,919.10,1131.05,893.16,1156.24,894.46C1181.43,895.76,1231.80,929.47,1231.80,929.47" fill="none" stroke="#f59e0b" stroke-width="2"/><text class="ax" x="854" y="1024.2" text-anchor="middle">06:00</text><text class="ax" x="929.72" y="1024.2" text-anchor="middle">09:00</text><text class="ax" x="1005.44" y="1024.2" text-anchor="middle">12:00</text><text class="ax" x="1081.16" y="1024.2" text-anchor="middle">15:00</text><text class="ax" x="1156.88" y="1024.2" text-anchor="middle">18:00</text><text class="ax" x="1232.6" y="1024.2" text-anchor="middle">21:00</text><circle cx="872.5" cy="1052.5" r="4.4" fill="#10b981"/><text class="lg" x="885" y="1056.2">Organic</text><circle cx="967" cy="1052.5" r="4.4" fill="#6366f1"/><text class="lg" x="980" y="1056.2">Paid</text><circle cx="1044.5" cy="1052.5" r="4.4" fill="#8b5cf6"/><text class="lg" x="1057" y="1056.2">Social</text><circle cx="1130.5" cy="1052.5" r="4.4" fill="#f59e0b"/><text class="lg" x="1143" y="1056.2">Direct</text></svg>
<div class="card" style="left:1297px;top:684px;width:484px;height:402px"></div>
<div class="t b" style="left:1322px;top:709px;font-size:20px;line-height:28px;color:#0a0a0a;">Performance Metrics</div>
<div class="t" style="left:1322px;top:743px;font-size:14px;line-height:20px;color:#737373;">Last 6 Months</div>
<svg class="ic" style="left:1297px;top:684px" width="484" height="402" viewBox="1297 684 484 402"><line x1="1356.5" x2="1756.2" y1="996.00" y2="996.00" stroke="#e8e8e8" stroke-width="1"/><text class="ax" x="1342.3" y="999.55" text-anchor="end">0</text><line x1="1356.5" x2="1756.2" y1="962.75" y2="962.75" stroke="#e8e8e8" stroke-width="1"/><line x1="1356.5" x2="1756.2" y1="929.50" y2="929.50" stroke="#e8e8e8" stroke-width="1"/><text class="ax" x="1342.3" y="933.05" text-anchor="end">100</text><line x1="1356.5" x2="1756.2" y1="896.25" y2="896.25" stroke="#e8e8e8" stroke-width="1"/><line x1="1356.5" x2="1756.2" y1="863.00" y2="863.00" stroke="#e8e8e8" stroke-width="1"/><text class="ax" x="1342.3" y="866.55" text-anchor="end">200</text><line x1="1356.5" x2="1756.2" y1="829.75" y2="829.75" stroke="#e8e8e8" stroke-width="1"/><line x1="1356.5" x2="1756.2" y1="796.50" y2="796.50" stroke="#e8e8e8" stroke-width="1"/><text class="ax" x="1342.3" y="800.05" text-anchor="end">300</text><path d="M1366.65,995.60V874.85a3,3 0 0 1 3,-3h14.35a3,3 0 0 1 3,3V995.60Z" fill="#10b981"/><path d="M1399.27,995.60V795.67a3,3 0 0 1 3,-3h14.35a3,3 0 0 1 3,3V995.60Z" fill="#10b981"/><path d="M1431.89,995.60V840.92a3,3 0 0 1 3,-3h14.35a3,3 0 0 1 3,3V995.60Z" fill="#10b981"/><path d="M1464.51,995.60V950.03a3,3 0 0 1 3,-3h14.35a3,3 0 0 1 3,3V995.60Z" fill="#10b981"/><path d="M1497.13,995.60V859.55a3,3 0 0 1 3,-3h14.35a3,3 0 0 1 3,3V995.60Z" fill="#10b981"/><path d="M1529.75,995.60V856.22a3,3 0 0 1 3,-3h14.35a3,3 0 0 1 3,3V995.60Z" fill="#10b981"/><path d="M1562.37,995.60V872.19a3,3 0 0 1 3,-3h14.35a3,3 0 0 1 3,3V995.60Z" fill="#10b981"/><path d="M1594.99,995.60V852.23a3,3 0 0 1 3,-3h14.35a3,3 0 0 1 3,3V995.60Z" fill="#10b981"/><path d="M1627.61,995.60V882.17a3,3 0 0 1 3,-3h14.35a3,3 0 0 1 3,3V995.60Z" fill="#10b981"/><path d="M1660.23,995.60V825.61a3,3 0 0 1 3,-3h14.35a3,3 0 0 1 3,3V995.60Z" fill="#10b981"/><path d="M1692.85,995.60V845.57a3,3 0 0 1 3,-3h14.35a3,3 0 0 1 3,3V995.60Z" fill="#10b981"/><path d="M1725.47,995.60V832.27a3,3 0 0 1 3,-3h14.35a3,3 0 0 1 3,3V995.60Z" fill="#10b981"/><text class="ax" x="1377.2" y="1024.2" text-anchor="middle">January</text><text class="ax" x="1442.44" y="1024.2" text-anchor="middle">March</text><text class="ax" x="1507.68" y="1024.2" text-anchor="middle">May</text><text class="ax" x="1572.92" y="1024.2" text-anchor="middle">July</text><text class="ax" x="1638.16" y="1024.2" text-anchor="middle">September</text><text class="ax" x="1703.4" y="1024.2" text-anchor="middle">November</text><circle cx="1502.5" cy="1052.5" r="4.4" fill="#10b981"/><text class="lg" x="1515" y="1056.2">Desktop</text></svg>
<div class="card" style="left:281px;top:1118px;width:738px;height:400px"></div>
<div class="t b" style="left:306px;top:1143px;font-size:20px;line-height:28px;color:#0a0a0a;">Traffic Analytics</div>
<div class="t" style="left:306px;top:1177px;font-size:14px;line-height:20px;color:#737373;">Per Month</div>
<div class="card" style="left:1043px;top:1118px;width:738px;height:400px"></div>
<div class="t b" style="left:1068px;top:1143px;font-size:20px;line-height:28px;color:#0a0a0a;">System Performance</div>
<div class="t" style="left:1068px;top:1177px;font-size:14px;line-height:20px;color:#737373;">Last 24 hours</div>
<div style="position:absolute;left:0;top:0;width:256px;height:1212px;will-change:transform">
<div class="t" style="left:24px;top:88px;font-size:12px;line-height:16px;color:#262626;">Analysis</div>
<svg class="ic" style="left:24px;top:120px" width="16" height="16" viewBox="0 0 24 24" fill="none" stroke="#737373" stroke-width="2" stroke-linecap="round" stroke-linejoin="round"><path d="m7 11 2-2-2-2"/><path d="M11 13h4"/><rect width="18" height="18" x="3" y="3" rx="2" ry="2"/></svg>
<div class="t" style="left:52px;top:118px;font-size:14px;line-height:20px;color:#171717;">Home</div>
<div class="box" style="left:16px;top:148px;width:224px;height:32px;border-radius:8px;background:#f2f2f2"></div>
<svg class="ic" style="left:24px;top:156px" width="16" height="16" viewBox="0 0 24 24" fill="none" stroke="#1a1a1a" stroke-width="2" stroke-linecap="round" stroke-linejoin="round"><path d="M7 2h10"/><path d="M5 6h14"/><rect width="18" height="12" x="3" y="10" rx="2"/></svg>
<div class="t b" style="left:52px;top:154px;font-size:14px;line-height:20px;color:#171717;">Dashboard</div>
<svg class="ic" style="left:24px;top:192px" width="16" height="16" viewBox="0 0 24 24" fill="none" stroke="#737373" stroke-width="2" stroke-linecap="round" stroke-linejoin="round"><path d="M12.83 2.18a2 2 0 0 0-1.66 0L2.6 6.08a1 1 0 0 0 0 1.83l8.58 3.91a2 2 0 0 0 1.66 0l8.58-3.9a1 1 0 0 0 0-1.83z"/><path d="M2 12a1 1 0 0 0 .58.91l8.6 3.91a2 2 0 0 0 1.65 0l8.58-3.9A1 1 0 0 0 22 12"/><path d="M2 17a1 1 0 0 0 .58.91l8.6 3.91a2 2 0 0 0 1.65 0l8.58-3.9A1 1 0 0 0 22 17"/></svg>
<div class="t" style="left:52px;top:190px;font-size:14px;line-height:20px;color:#171717;">Server Monitor</div>
<svg class="ic" style="left:24px;top:228px" width="16" height="16" viewBox="0 0 24 24" fill="none" stroke="#737373" stroke-width="2" stroke-linecap="round" stroke-linejoin="round"><path d="M11 21.73a2 2 0 0 0 2 0l7-4A2 2 0 0 0 21 16V8a2 2 0 0 0-1-1.73l-7-4a2 2 0 0 0-2 0l-7 4A2 2 0 0 0 3 8v8a2 2 0 0 0 1 1.73z"/><path d="M12 22V12"/><polyline points="3.29 7 12 12 20.71 7"/><path d="m7.5 4.27 9 5.15"/></svg>
<div class="t" style="left:52px;top:226px;font-size:14px;line-height:20px;color:#171717;">Products &amp; Inventory</div>
<svg class="ic" style="left:24px;top:264px" width="16" height="16" viewBox="0 0 24 24" fill="none" stroke="#737373" stroke-width="2" stroke-linecap="round" stroke-linejoin="round"><circle cx="8" cy="21" r="1"/><circle cx="19" cy="21" r="1"/><path d="M2.05 2.05h2l2.66 12.42a2 2 0 0 0 2 1.58h9.78a2 2 0 0 0 1.95-1.57l1.65-7.43H5.12"/></svg>
<div class="t" style="left:52px;top:262px;font-size:14px;line-height:20px;color:#171717;">Orders</div>
<svg class="ic" style="left:24px;top:300px" width="16" height="16" viewBox="0 0 24 24" fill="none" stroke="#737373" stroke-width="2" stroke-linecap="round" stroke-linejoin="round"><path d="M16 21v-2a4 4 0 0 0-4-4H6a4 4 0 0 0-4 4v2"/><circle cx="9" cy="7" r="4"/><path d="M22 21v-2a4 4 0 0 0-3-3.87"/><path d="M16 3.13a4 4 0 0 1 0 7.75"/></svg>
<div class="t" style="left:52px;top:298px;font-size:14px;line-height:20px;color:#171717;">User Management</div>
<svg class="ic" style="left:24px;top:336px" width="16" height="16" viewBox="0 0 24 24" fill="none" stroke="#737373" stroke-width="2" stroke-linecap="round" stroke-linejoin="round"><path d="M3 3v16a2 2 0 0 0 2 2h16"/><path d="M18 17V9"/><path d="M13 17V5"/><path d="M8 17v-3"/></svg>
<div class="t" style="left:52px;top:334px;font-size:14px;line-height:20px;color:#171717;">Reports &amp; Analytics</div>
<svg class="ic" style="left:24px;top:372px" width="16" height="16" viewBox="0 0 24 24" fill="none" stroke="#737373" stroke-width="2" stroke-linecap="round" stroke-linejoin="round"><rect width="8" height="4" x="8" y="2" rx="1" ry="1"/><path d="M16 4h2a2 2 0 0 1 2 2v14a2 2 0 0 1-2 2H6a2 2 0 0 1-2-2V6a2 2 0 0 1 2-2h2"/><path d="M12 11h4"/><path d="M12 16h4"/><path d="M8 11h.01"/><path d="M8 16h.01"/></svg>
<div class="t" style="left:52px;top:370px;font-size:14px;line-height:20px;color:#171717;">Tasks &amp; Projects</div>
<svg class="ic" style="left:24px;top:408px" width="16" height="16" viewBox="0 0 24 24" fill="none" stroke="#737373" stroke-width="2" stroke-linecap="round" stroke-linejoin="round"><path d="M8 2v4"/><path d="M16 2v4"/><rect width="18" height="18" x="3" y="4" rx="2"/><path d="M3 10h18"/><path d="M8 14h.01"/><path d="M12 14h.01"/><path d="M16 14h.01"/><path d="M8 18h.01"/><path d="M12 18h.01"/><path d="M16 18h.01"/></svg>
<div class="t" style="left:52px;top:406px;font-size:14px;line-height:20px;color:#171717;">Calendar</div>
<svg class="ic" style="left:24px;top:444px" width="16" height="16" viewBox="0 0 24 24" fill="none" stroke="#737373" stroke-width="2" stroke-linecap="round" stroke-linejoin="round"><rect width="20" height="16" x="2" y="4" rx="2"/><path d="m22 7-8.97 5.7a1.94 1.94 0 0 1-2.06 0L2 7"/></svg>
<div class="t" style="left:52px;top:442px;font-size:14px;line-height:20px;color:#171717;">Messages</div>
<div class="t" style="left:24px;top:500px;font-size:12px;line-height:16px;color:#262626;">Projects</div>
<svg class="ic" style="left:24px;top:532px" width="16" height="16" viewBox="0 0 24 24" fill="none" stroke="#1a1a1a" stroke-width="2" stroke-linecap="round" stroke-linejoin="round"><line x1="22" x2="2" y1="6" y2="6"/><line x1="22" x2="2" y1="18" y2="18"/><line x1="6" x2="6" y1="2" y2="22"/><line x1="18" x2="18" y1="2" y2="22"/></svg>
<div class="t" style="left:52px;top:530px;font-size:14px;line-height:20px;color:#171717;">Design Engineering</div>
<svg class="ic" style="left:24px;top:568px" width="16" height="16" viewBox="0 0 24 24" fill="none" stroke="#1a1a1a" stroke-width="2" stroke-linecap="round" stroke-linejoin="round"><path d="M21 12c.552 0 1.005-.449.95-.998a10 10 0 0 0-8.953-8.951c-.55-.055-.998.398-.998.95v8a1 1 0 0 0 1 1z"/><path d="M21.21 15.89A10 10 0 1 1 8 2.83"/></svg>
<div class="t" style="left:52px;top:566px;font-size:14px;line-height:20px;color:#171717;">Sales &amp; Marketing</div>
<svg class="ic" style="left:24px;top:604px" width="16" height="16" viewBox="0 0 24 24" fill="none" stroke="#1a1a1a" stroke-width="2" stroke-linecap="round" stroke-linejoin="round"><path d="M14.106 5.553a2 2 0 0 0 1.788 0l3.659-1.83A1 1 0 0 1 21 4.619v12.764a1 1 0 0 1-.553.894l-4.553 2.277a2 2 0 0 1-1.788 0l-4.212-2.106a2 2 0 0 0-1.788 0l-3.659 1.83A1 1 0 0 1 3 19.381V6.618a1 1 0 0 1 .553-.894l4.553-2.277a2 2 0 0 1 1.788 0z"/><path d="M15 5.764v15"/><path d="M9 3.236v15"/></svg>
<div class="t" style="left:52px;top:602px;font-size:14px;line-height:20px;color:#171717;">Travel</div>
<svg class="ic" style="left:24px;top:640px" width="16" height="16" viewBox="0 0 24 24" fill="none" stroke="#1a1a1a" stroke-width="2" stroke-linecap="round" stroke-linejoin="round"><circle cx="12" cy="12" r="1"/><circle cx="19" cy="12" r="1"/><circle cx="5" cy="12" r="1"/></svg>
<div class="t" style="left:52px;top:638px;font-size:14px;line-height:20px;color:#171717;">More</div>
<svg class="ic" style="left:24px;top:1156px" width="32" height="32" viewBox="0 0 32 32"><defs><clipPath id="av"><circle cx="16" cy="16" r="16"/></clipPath></defs><g clip-path="url(#av)"><rect width="32" height="32" fill="#e9570b"/><path d="M2,25.6L10.5,21Q16,24.5 19.5,20.5L30,25.6V33H2Z" fill="#2d2d2d"/><path d="M12.4,16H19.3V21Q16,25.5 12.4,22Z" fill="#b9b9b9"/><ellipse cx="15.8" cy="12.9" rx="5.3" ry="6.5" fill="#c9c9c9"/><path d="M10.3,12C9.9,6.2 12.5,3.8 15.7,3.8C19,3.8 21.6,6.2 21.3,12C20.6,8.6 19,7.3 15.8,7.3C12.6,7.3 11,8.6 10.3,12Z" fill="#3a3a3a"/><path d="M12.4,10.6h2M17,11h2" stroke="#555" stroke-width="1" fill="none"/><path d="M13.6,14.8Q16,17 18.3,15" stroke="#666" stroke-width="1.1" fill="none"/></g></svg>
<div class="t b" style="left:68px;top:1154px;font-size:14px;line-height:18px;color:#0a0a0a;">Dennis Adriaansen</div>
<div class="t" style="left:68px;top:1173px;font-size:12px;line-height:16px;color:#171717;">m@example.com</div>
<svg class="ic" style="left:216px;top:1164px" width="16" height="16" viewBox="0 0 24 24" fill="none" stroke="#1a1a1a" stroke-width="2" stroke-linecap="round" stroke-linejoin="round"><path d="m7 15 5 5 5-5"/><path d="m7 9 5-5 5 5"/></svg>
</div>
</body></html>
